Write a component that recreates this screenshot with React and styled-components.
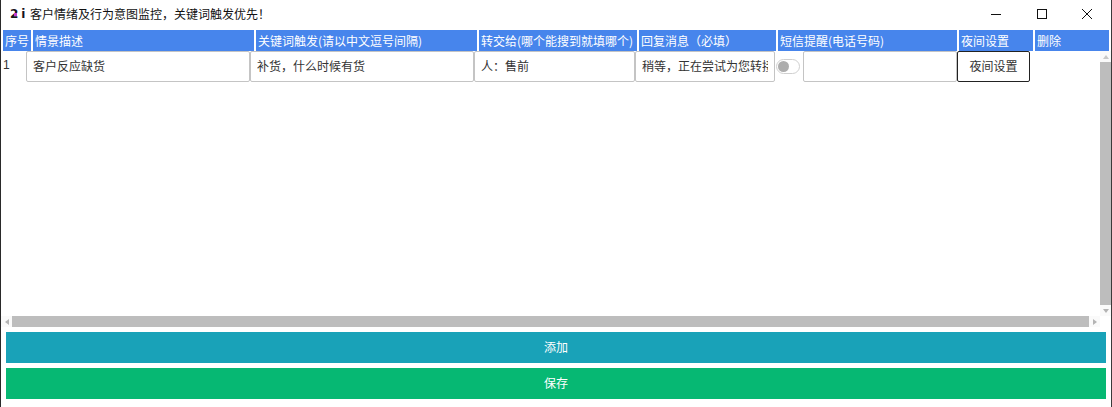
import React from 'react';
import styled, { createGlobalStyle } from 'styled-components';

const GlobalStyle = createGlobalStyle`
  html, body {
    margin: 0;
    padding: 0;
    background: #fff;
  }
  * {
    box-sizing: border-box;
  }
`;

const columns = '25px 224px 224px 161px 140px 182px 73px';

const headers = [
  { label: '序号', width: 28 },
  { label: '情景描述', width: 221 },
  { label: '关键词触发(请以中文逗号间隔)', width: 221 },
  { label: '转交给(哪个能搜到就填哪个)', width: 158 },
  { label: '回复消息（必填）', width: 137 },
  { label: '短信提醒(电话号码)', width: 179 },
  { label: '夜间设置', width: 74 },
  { label: '删除', width: 74 },
];

function App() {
  return (
    <Window>
      <GlobalStyle />
      <TitleBar>
        <Logo>2<LogoSpark />i</Logo>
        <Title>客户情绪及行为意图监控，关键词触发优先！</Title>
        <WindowControls>
          <ControlButton>
            <svg width="10" height="10" viewBox="0 0 10 10"><path d="M0 5.5h10" stroke="#111" fill="none" /></svg>
          </ControlButton>
          <ControlButton>
            <svg width="10" height="10" viewBox="0 0 10 10"><rect x="0.5" y="0.5" width="9" height="9" stroke="#111" fill="none" /></svg>
          </ControlButton>
          <ControlButton>
            <svg width="10" height="10" viewBox="0 0 10 10"><path d="M0 0l10 10M10 0L0 10" stroke="#111" fill="none" /></svg>
          </ControlButton>
        </WindowControls>
      </TitleBar>

      <HeaderRow>
        {headers.map((h) => (
          <HeaderCell key={h.label} $width={h.width}>{h.label}</HeaderCell>
        ))}
      </HeaderRow>

      <TableBody>
        <Rows>
          <Row>
            <RowIndex>1</RowIndex>
            <TextCell><CellText>客户反应缺货</CellText></TextCell>
            <TextCell><CellText>补货，什么时候有货</CellText></TextCell>
            <TextCell><CellText>人：售前</CellText></TextCell>
            <TextCell><CellText>稍等，正在尝试为您转接</CellText></TextCell>
            <SmsCell>
              <Toggle><ToggleKnob /></Toggle>
              <PhoneInput />
            </SmsCell>
            <NightButton>夜间设置</NightButton>
          </Row>
        </Rows>
        <VerticalBar>
          <Arrow $dir="up" />
          <VerticalThumb />
          <Arrow $dir="down" />
        </VerticalBar>
      </TableBody>

      <HorizontalBar>
        <Arrow $dir="left" />
        <HorizontalThumb />
        <Arrow $dir="right" />
      </HorizontalBar>

      <Actions>
        <ActionButton $color="#19a2b8">添加</ActionButton>
        <ActionButton $color="#06b873">保存</ActionButton>
      </Actions>
    </Window>
  );
}

export default App;

const Window = styled.div`
  width: 1112px;
  height: 407px;
  display: flex;
  flex-direction: column;
  overflow: hidden;
  background: #fff;
  border-left: 1px solid #2a2a2a;
  border-right: 1px solid #3a3a3a;
  font-family: "Noto Sans CJK SC", "Noto Sans", sans-serif;
  font-size: 12px;
`;

const TitleBar = styled.div`
  height: 30px;
  flex: none;
  display: flex;
  align-items: flex-start;
  padding-left: 9px;
`;

const Logo = styled.div`
  position: relative;
  width: 20px;
  font-family: "DejaVu Sans", sans-serif;
  font-size: 12px;
  font-weight: 700;
  line-height: 28px;
  color: #17121c;
  letter-spacing: 3px;
`;

const LogoSpark = styled.span`
  position: absolute;
  left: 4px;
  top: 13px;
  width: 3px;
  height: 3px;
  background: #c23ad0;
`;

const Title = styled.div`
  font-size: 12px;
  line-height: 28px;
  color: #111;
`;

const WindowControls = styled.div`
  margin-left: auto;
  display: flex;
  padding-right: 1px;
`;

const ControlButton = styled.div`
  width: 45.5px;
  height: 28px;
  display: flex;
  align-items: center;
  justify-content: center;
`;

const HeaderRow = styled.div`
  height: 21px;
  flex: none;
  display: flex;
  gap: 2px;
  padding-left: 2px;
`;

const HeaderCell = styled.div`
  flex: none;
  width: ${(p) => p.$width}px;
  background: #4785ec;
  color: #fff;
  line-height: 21px;
  padding-left: 2px;
  white-space: nowrap;
  overflow: hidden;
`;

const TableBody = styled.div`
  height: 265px;
  flex: none;
  display: flex;
`;

const Rows = styled.div`
  flex: 1;
  min-width: 0;
`;

const Row = styled.div`
  display: grid;
  grid-template-columns: ${columns};
  height: 31px;
`;

const RowIndex = styled.div`
  padding-left: 2px;
  font-family: "Liberation Sans", sans-serif;
  line-height: 29px;
  color: #333;
`;

const TextCell = styled.div`
  height: 31px;
  border: 1px solid #c4c4c4;
  border-radius: 2px;
  padding: 0 6px;
  line-height: 27px;
  color: #333;
`;

const CellText = styled.div`
  white-space: nowrap;
  overflow: hidden;
`;

const SmsCell = styled.div`
  display: flex;
  align-items: flex-start;
`;

const Toggle = styled.div`
  width: 24px;
  height: 15px;
  margin: 8px 3px 0 1px;
  flex: none;
  border: 1px solid #d0d0d0;
  border-radius: 8px;
  padding: 1px;
`;

const ToggleKnob = styled.div`
  width: 11px;
  height: 11px;
  border-radius: 50%;
  background: #adadad;
`;

const PhoneInput = styled.div`
  width: 154px;
  height: 31px;
  flex: none;
  border: 1px solid #c4c4c4;
  border-radius: 2px;
`;

const NightButton = styled.div`
  width: 73px;
  height: 31px;
  border: 1px solid #222;
  border-radius: 2px;
  text-align: center;
  line-height: 27px;
  color: #333;
`;

const VerticalBar = styled.div`
  width: 11px;
  flex: none;
  display: flex;
  flex-direction: column;
  background: #fafafa;
`;

const VerticalThumb = styled.div`
  flex: 1;
  background: #bdbdbd;
`;

const HorizontalBar = styled.div`
  height: 11px;
  flex: none;
  display: flex;
  margin-right: 11px;
  background: #fafafa;
`;

const HorizontalThumb = styled.div`
  flex: 1;
  background: #bdbdbd;
`;

const arrowShapes = {
  up: 'border-width: 0 3px 4px; border-color: transparent transparent #c8c8c8;',
  down: 'border-width: 4px 3px 0; border-color: #b4b4b4 transparent transparent;',
  left: 'border-width: 3px 4px 3px 0; border-color: transparent #b4b4b4 transparent transparent;',
  right: 'border-width: 3px 0 3px 4px; border-color: transparent transparent transparent #b4b4b4;',
};

const Arrow = styled.div`
  width: 11px;
  height: 11px;
  flex: none;
  display: flex;
  align-items: center;
  justify-content: center;

  &:before {
    content: "";
    width: 0;
    height: 0;
    border-style: solid;
    ${(p) => arrowShapes[p.$dir]}
  }
`;

const Actions = styled.div`
  display: flex;
  flex-direction: column;
  gap: 5px;
  padding: 5px 5px 0 5px;
`;

const ActionButton = styled.div`
  height: 31px;
  background: ${(p) => p.$color};
  color: #fff;
  text-align: center;
  line-height: 29px;
`;
